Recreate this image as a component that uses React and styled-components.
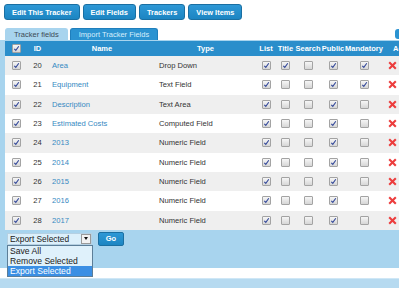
import React from "react";
import styled, { createGlobalStyle } from "styled-components";

const GlobalStyle = createGlobalStyle`
  body {
    margin: 0;
    overflow: hidden;
    background: #fff;
    font-family: "Liberation Sans", Arial, sans-serif;
  }
`;

const Page = styled.div`
  width: 430px;
`;

const ButtonBar = styled.div`
  display: flex;
  gap: 3px;
  padding: 4px 0 0 4px;
`;

const ToolButton = styled.button`
  height: 16px;
  padding: 0 7px;
  border: 1px solid #1a6fa2;
  border-radius: 3px;
  background: linear-gradient(#2e98d6, #1c85c2);
  color: #fff;
  font: bold 7.4px "Liberation Sans", Arial, sans-serif;
  white-space: nowrap;
`;

const TabRow = styled.div`
  display: flex;
  gap: 2px;
  margin-top: 8px;
  padding: 0 5px;
  height: 12px;
`;

const Tab = styled.div`
  display: flex;
  align-items: center;
  padding: 0 8px;
  border-radius: 3px 3px 0 0;
  font-size: 7.5px;
  white-space: nowrap;
  background: ${(p) => (p.$active ? "#a8d4ee" : "#2b93d1")};
  color: ${(p) => (p.$active ? "#3c4a55" : "#d6eefc")};
  border: 1px solid ${(p) => (p.$active ? "#a8d4ee" : "#1f7fbc")};
  border-bottom: none;
`;

const Spacer = styled.div`
  flex: 1;
`;

const SideButton = styled.div`
  width: 30px;
  height: 10px;
  margin-top: 1px;
  border-radius: 3px;
  background: #2b93d1;
`;

const Panel = styled.div`
  background: #a8d4ee;
  padding: 1px 0 0 5px;
`;

const cols = "22px 21px 108px 99px 22px 17px 28px 22px 40px 46px";

const HeaderRow = styled.div`
  display: grid;
  grid-template-columns: ${cols};
  height: 15px;
  background: #2a8ecb;
  color: #fff;
  font-size: 7.5px;
  font-weight: bold;
`;

const HeadCell = styled.div`
  display: flex;
  align-items: center;
  justify-content: ${(p) => (p.$left ? "flex-start" : "center")};
  padding-left: ${(p) => (p.$left ? "9px" : "0")};
  white-space: nowrap;
`;

const Row = styled.div`
  display: grid;
  grid-template-columns: ${cols};
  height: 19.33px;
  background: ${(p) => (p.$odd ? "#fff" : "#efefef")};
  font-size: 7.6px;
  color: #333;
`;

const Cell = styled.div`
  display: flex;
  align-items: center;
  justify-content: ${(p) => p.$align || "center"};
  padding-left: ${(p) => p.$pad || "0"};
  white-space: nowrap;
  color: ${(p) => (p.$link ? "#3589c2" : "#333")};
`;

const Box = styled.span`
  display: inline-flex;
  align-items: center;
  justify-content: center;
  width: 9px;
  height: 9px;
  box-sizing: border-box;
  border: 1px solid #a3a3a3;
  border-radius: 1px;
  background: linear-gradient(#f6f6f6, #d6d6d6);
`;

const Footer = styled.div`
  display: flex;
  align-items: flex-start;
  gap: 6px;
  height: 38px;
  padding: 2px 0 0 2px;
  box-sizing: border-box;
`;

const SelectWrap = styled.div`
  position: relative;
  margin-top: 1px;
`;

const SelectBox = styled.div`
  display: flex;
  align-items: center;
  justify-content: space-between;
  width: 85px;
  height: 12px;
  box-sizing: border-box;
  border: 1px solid #b5d0e2;
  background: #dcf0fb;
  font-size: 8.4px;
  color: #222;
  padding-left: 2px;
`;

const Arrow = styled.span`
  display: flex;
  align-items: center;
  justify-content: center;
  width: 10px;
  height: 10px;
  box-sizing: border-box;
  border: 1px solid #9a9a9a;
  background: #f2f2f2;
  &::after {
    content: "";
    border-left: 2.5px solid transparent;
    border-right: 2.5px solid transparent;
    border-top: 3px solid #111;
  }
`;

const Menu = styled.div`
  position: absolute;
  top: 12px;
  left: 0;
  width: 86px;
  box-sizing: border-box;
  border: 1px solid #5c7e98;
  background: #dff1fb;
  z-index: 2;
`;

const MenuItem = styled.div`
  height: 10px;
  line-height: 10px;
  padding-left: 2px;
  font-size: 8.6px;
  color: ${(p) => (p.$selected ? "#fff" : "#222")};
  background: ${(p) => (p.$selected ? "#3b8fe4" : "transparent")};
  white-space: nowrap;
`;

const GoButton = styled.button`
  width: 26px;
  height: 14px;
  border: 1px solid #1a6fa2;
  border-radius: 2px;
  background: linear-gradient(#2e98d6, #1c85c2);
  color: #fff;
  font: bold 7.5px "Liberation Sans", Arial, sans-serif;
  padding: 0;
`;

const Gap = styled.div`
  height: 10px;
`;

const BottomStrip = styled.div`
  height: 12px;
  background: #b6daf0;
  border-top: 1px solid #cfe7f6;
`;

const Check = ({ on }) => (
  <Box>
    {on && (
      <svg width="7" height="7" viewBox="0 0 7 7">
        <path d="M1.3 3.8 L2.8 5.4 L5.8 1.3" fill="none" stroke="#34499a" strokeWidth="1.1" />
      </svg>
    )}
  </Box>
);

const RemoveIcon = () => (
  <svg width="9" height="9" viewBox="0 0 9 9">
    <path d="M1.2 1.2 L7.8 7.8 M7.8 1.2 L1.2 7.8" stroke="#ec3d3d" strokeWidth="2.1" />
  </svg>
);

const fields = [
  { id: 20, name: "Area", type: "Drop Down", flags: [1, 1, 0, 1, 1] },
  { id: 21, name: "Equipment", type: "Text Field", flags: [1, 0, 0, 1, 1] },
  { id: 22, name: "Description", type: "Text Area", flags: [1, 0, 0, 1, 0] },
  { id: 23, name: "Estimated Costs", type: "Computed Field", flags: [1, 0, 0, 1, 0] },
  { id: 24, name: "2013", type: "Numeric Field", flags: [1, 0, 0, 1, 0] },
  { id: 25, name: "2014", type: "Numeric Field", flags: [1, 0, 0, 1, 0] },
  { id: 26, name: "2015", type: "Numeric Field", flags: [1, 0, 0, 1, 0] },
  { id: 27, name: "2016", type: "Numeric Field", flags: [1, 0, 0, 1, 0] },
  { id: 28, name: "2017", type: "Numeric Field", flags: [1, 0, 0, 1, 0] },
];

const App = () => {
  return (
    <Page>
      <GlobalStyle />
      <ButtonBar>
        <ToolButton>Edit This Tracker</ToolButton>
        <ToolButton>Edit Fields</ToolButton>
        <ToolButton>Trackers</ToolButton>
        <ToolButton>View Items</ToolButton>
      </ButtonBar>
      <TabRow>
        <Tab $active>Tracker fields</Tab>
        <Tab>Import Tracker Fields</Tab>
        <Spacer />
        <SideButton />
      </TabRow>
      <Panel>
        <HeaderRow>
          <HeadCell>
            <Check on />
          </HeadCell>
          <HeadCell>ID</HeadCell>
          <HeadCell>Name</HeadCell>
          <HeadCell>Type</HeadCell>
          <HeadCell>List</HeadCell>
          <HeadCell>Title</HeadCell>
          <HeadCell>Search</HeadCell>
          <HeadCell>Public</HeadCell>
          <HeadCell>Mandatory</HeadCell>
          <HeadCell $left>Actions</HeadCell>
        </HeaderRow>
        {fields.map((f, i) => (
          <Row key={f.id} $odd={i % 2 === 1}>
            <Cell>
              <Check on />
            </Cell>
            <Cell>{f.id}</Cell>
            <Cell $align="flex-start" $pad="4px" $link>
              {f.name}
            </Cell>
            <Cell $align="flex-start" $pad="3px">
              {f.type}
            </Cell>
            {f.flags.map((on, j) => (
              <Cell key={j}>
                <Check on={!!on} />
              </Cell>
            ))}
            <Cell $align="flex-start" $pad="4px">
              <RemoveIcon />
            </Cell>
          </Row>
        ))}
        <Footer>
          <SelectWrap>
            <SelectBox>
              Export Selected
              <Arrow />
            </SelectBox>
            <Menu>
              <MenuItem>Save All</MenuItem>
              <MenuItem>Remove Selected</MenuItem>
              <MenuItem $selected>Export Selected</MenuItem>
            </Menu>
          </SelectWrap>
          <GoButton>Go</GoButton>
        </Footer>
      </Panel>
      <Gap />
      <BottomStrip />
    </Page>
  );
};

export default App;
